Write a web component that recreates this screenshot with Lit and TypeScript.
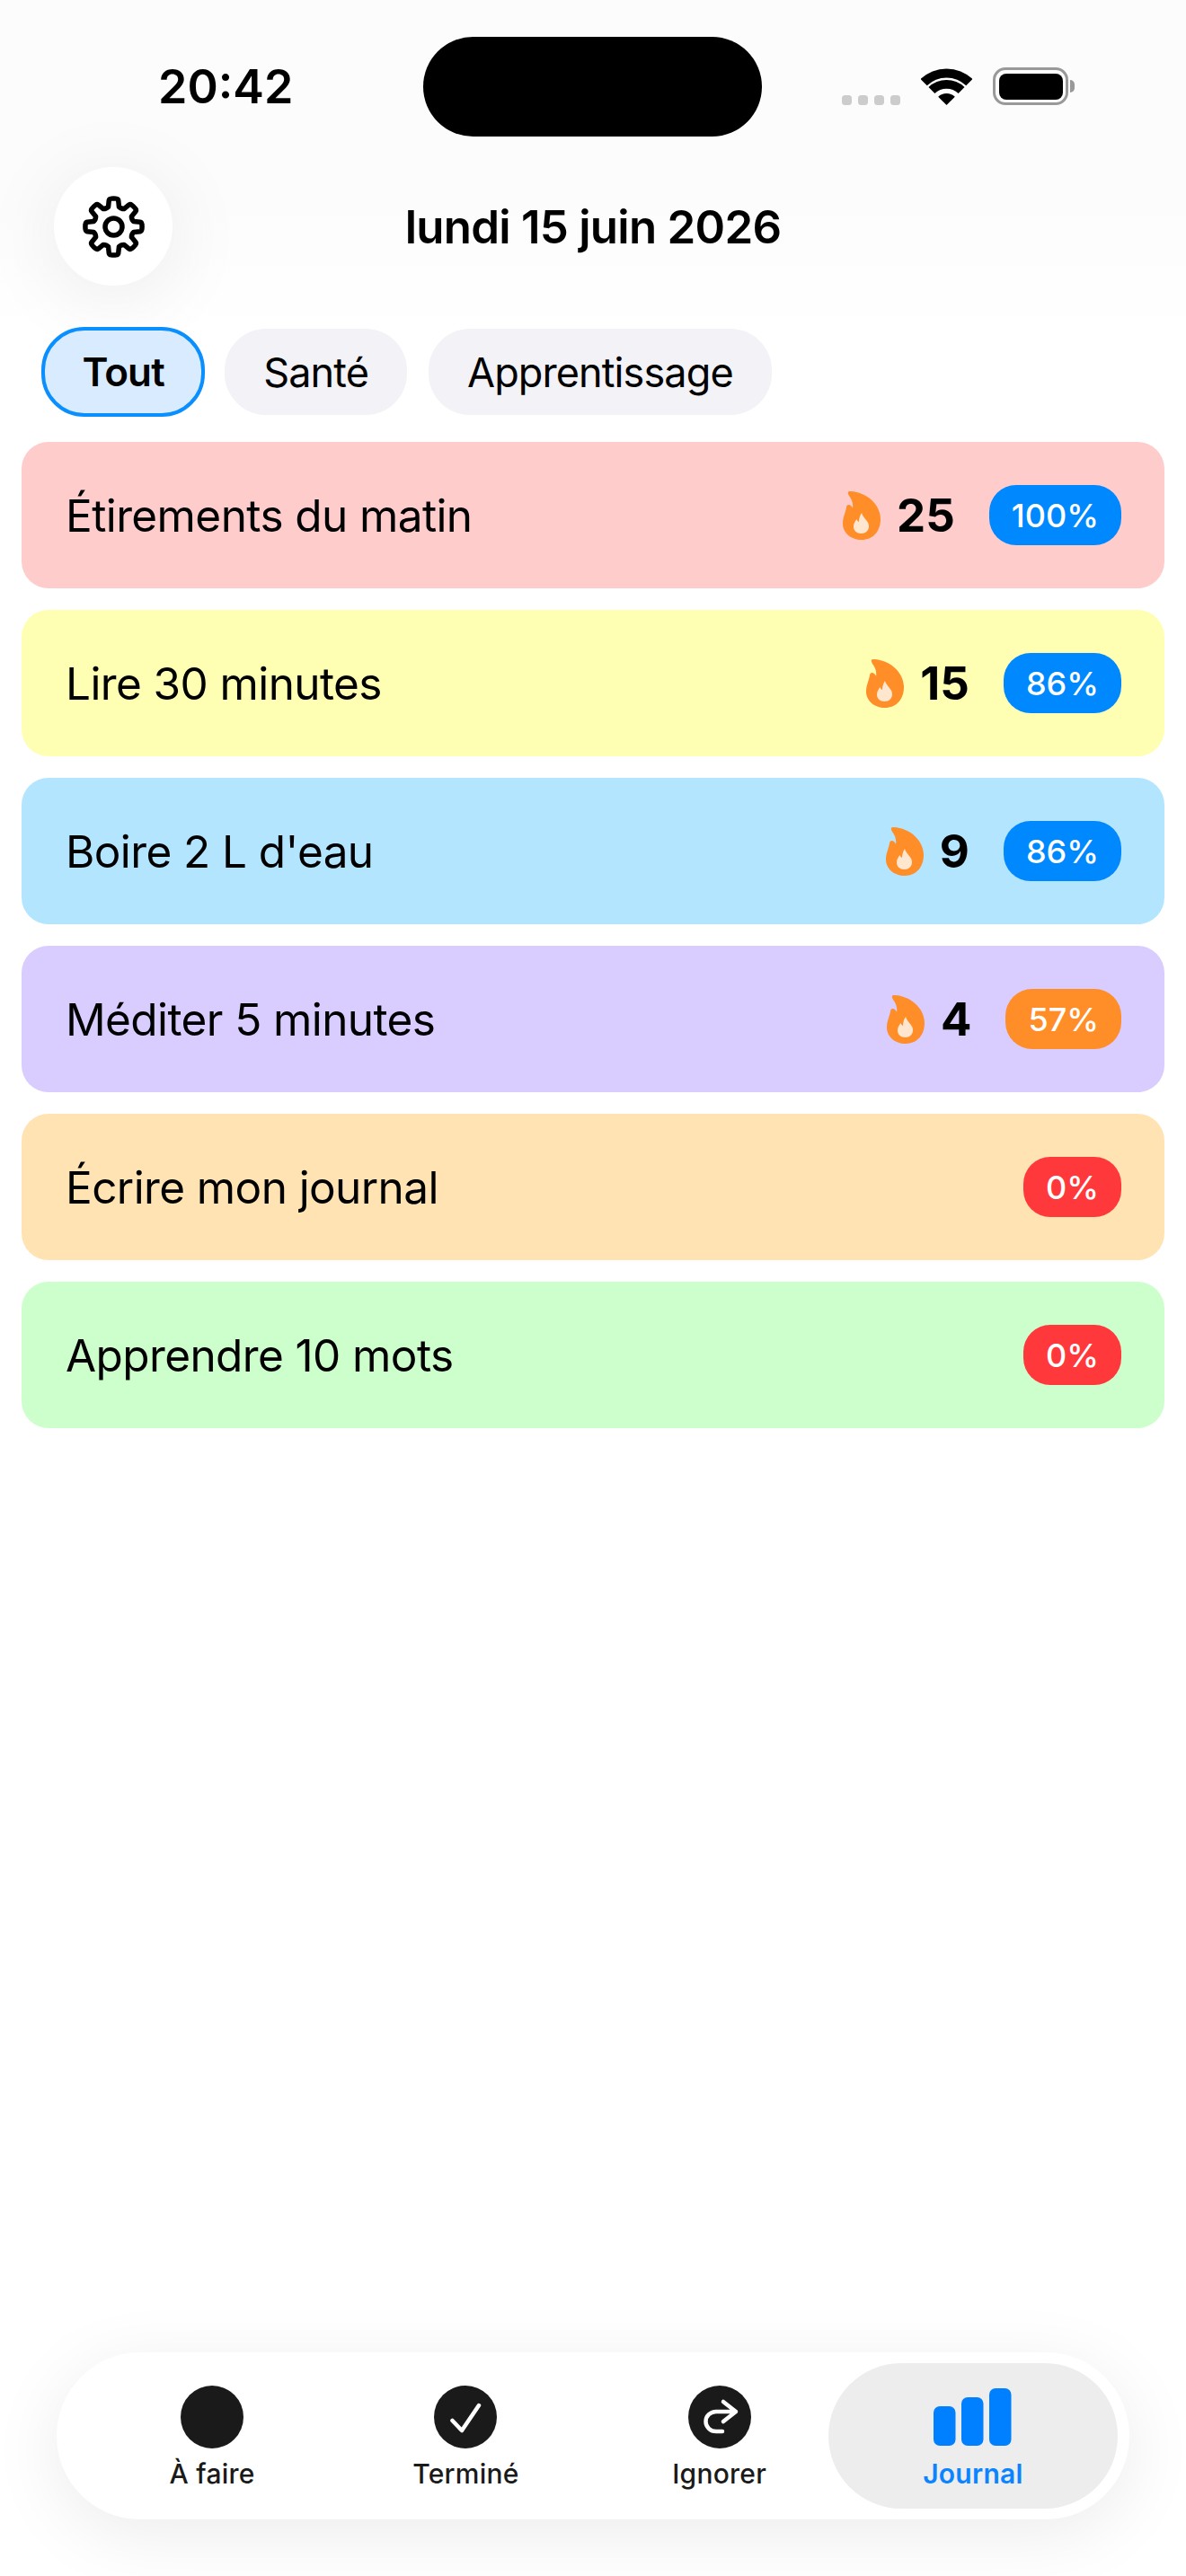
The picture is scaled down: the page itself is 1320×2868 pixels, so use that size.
import { LitElement, html, css } from "lit";
import { customElement } from "lit/decorators.js";

interface Habit { name: string; color: string; streak?: number; pct: number; level: string; }

const HABITS: Habit[] = [
  { name: "Étirements du matin", color: "#ffcccc", streak: 25, pct: 100, level: "high" },
  { name: "Lire 30 minutes", color: "#ffffb3", streak: 15, pct: 86, level: "high" },
  { name: "Boire 2 L d'eau", color: "#b3e5ff", streak: 9, pct: 86, level: "high" },
  { name: "Méditer 5 minutes", color: "#d9ccff", streak: 4, pct: 57, level: "mid" },
  { name: "Écrire mon journal", color: "#ffe3b3", pct: 0, level: "low" },
  { name: "Apprendre 10 mots", color: "#ccffcc", pct: 0, level: "low" },
];

function gearPath(cx: number, cy: number, R: number, r: number): string {
  const p = (rad: number, deg: number) => {
    const a = ((deg - 90) * Math.PI) / 180;
    return `${(cx + rad * Math.cos(a)).toFixed(2)} ${(cy + rad * Math.sin(a)).toFixed(2)}`;
  };
  let d = "";
  for (let i = 0; i < 8; i++) {
    const c = i * 45;
    d += i === 0 ? `M${p(r, c - 15)}` : ` Q${p(r - 1.5, c - 22.5)} ${p(r, c - 15)}`;
    d += ` L${p(R - 1, c - 10)} Q${p(R + 0.5, c - 9)} ${p(R + 0.5, c - 5)} Q${p(R + 0.8, c)} ${p(R + 0.5, c + 5)} Q${p(R + 0.5, c + 9)} ${p(R - 1, c + 10)} L${p(r, c + 15)}`;
  }
  d += ` Q${p(r - 1.5, -22.5)} ${p(r, -15)} Z`;
  return d;
}

function sector(cx: number, cy: number, r1: number, r2: number): string {
  const k = 0.69;
  const inner = r1 === 0
    ? `L${cx} ${cy}`
    : `L${cx + r1 * k} ${cy - r1 * k} A${r1} ${r1} 0 0 0 ${cx - r1 * k} ${cy - r1 * k}`;
  return `M${cx - r2 * k} ${cy - r2 * k} A${r2} ${r2} 0 0 1 ${cx + r2 * k} ${cy - r2 * k} ${inner} Z`;
}

const flame = html`<svg class="flame" viewBox="0 0 42 54" width="42" height="54">
  <path fill="#ff8d28" d="M6 1C6 0 7 0 9 0C26 1 42 14 42 31C42 45 33 54 21 54C9 54 0 46 0 36C0 29 3 24 4 18C4 15 7 14 9 16C10 17 11 18 11 19C12 14 10 9 7 5C6 3 5.5 2 6 1Z"/>
  <path fill="#fff" fill-opacity=".78" d="M21 24C21.5 27 24 29 26 32C28 34.5 29 36 29 39C29 43.5 25.5 47 20.5 47C15.5 47 12 43.5 12 39.5C12 36 13.5 33.5 15.5 31C16 32.5 17 33.5 18 34C18 30 19 27 21 24Z"/>
</svg>`;

@customElement("app-root")
export class AppRoot extends LitElement {
  static styles = css`
    :host {
      display: flex;
      flex-direction: column;
      width: 1320px;
      height: 2868px;
      overflow: hidden;
      background: #fff;
      font-family: Inter, "Liberation Sans", sans-serif;
      color: #000;
      position: relative;
    }
    .top {
      background: linear-gradient(#fcfcfc, #fcfcfc 60%, #fff);
      height: 373px;
      margin-bottom: -9px;
      flex: none;
    }
    .status {
      display: grid;
      grid-template-columns: 471px 377px 1fr;
      padding-top: 41px;
      height: 111px;
    }
    .time {
      font-size: 52px;
      font-weight: 600;
      line-height: 111px;
      padding-left: 176px;
    }
    .island { background: #000; border-radius: 56px; height: 111px; }
    .sys { display: flex; align-items: flex-start; padding: 34px 0 0 89px; }
    .dots { display: flex; gap: 7px; margin-top: 31px; }
    .dots i { display: block; width: 11px; height: 11px; border-radius: 3.5px; background: #ccc; }
    .wifi { margin-left: 23px; display: block; }
    .batt {
      margin-left: 23px;
      width: 84px;
      height: 42px;
      box-sizing: border-box;
      border: 3.5px solid #999;
      border-radius: 14px;
      padding: 3.5px;
      position: relative;
    }
    .batt b { display: block; height: 100%; background: #000; border-radius: 8px; }
    .batt::after {
      content: "";
      position: absolute;
      right: -10px;
      top: 10.5px;
      width: 5px;
      height: 14px;
      border-radius: 0 5px 5px 0;
      background: #999;
    }
    .head {
      display: grid;
      grid-template-columns: 1fr auto 1fr;
      align-items: center;
      padding: 34px 60px 0;
    }
    .gear {
      width: 132px;
      height: 132px;
      border-radius: 50%;
      background: #fff;
      box-shadow: 0 12px 90px rgba(0, 0, 0, 0.08);
      display: flex;
      align-items: center;
      justify-content: center;
    }
    .date { font-size: 51px; font-weight: 600; letter-spacing: -0.75px; }
    .chips {
      position: relative;
      background: linear-gradient(transparent 9px, #fff 9px);
      padding: 0 0 0 46px;
      display: flex;
      gap: 22px;
      align-items: center;
      height: 100px;
    }
    .chip {
      height: 96px;
      box-sizing: border-box;
      border-radius: 46px;
      background: #f2f2f7;
      display: flex;
      align-items: center;
      font-size: 45px;
      padding: 0 43px;
      letter-spacing: -0.9px;
    }
    .chip + .chip + .chip { margin-left: 2px; }
    .chip.on {
      height: 100px;
      background: #d9ebff;
      border: 4.5px solid #0a8fff;
      border-radius: 48px;
      font-size: 44px;
      font-weight: 600;
      padding: 0 41.5px;
    }
    .list { display: flex; flex-direction: column; gap: 24px; padding: 28px 24px 0; background: #fff; }
    .card {
      height: 163px;
      border-radius: 30px;
      display: flex;
      align-items: center;
      padding: 0 48px 0 49px;
    }
    .name { flex: 1; font-size: 49.5px; letter-spacing: -0.6px; }
    .streak { display: flex; align-items: center; gap: 18px; margin-right: 38px; font-size: 51px; font-weight: 700; }
    .flame { display: block; flex: none; }
    .badge {
      height: 67px;
      border-radius: 30px;
      padding: 0 25px;
      display: flex;
      align-items: center;
      color: #fff;
      font-size: 36px;
      font-weight: 500;
    }
    .high { background: #0088ff; }
    .mid { background: #ff8d28; }
    .low { background: #ff383c; }
    .spacer { flex: 1; }
    .bar {
      margin: 0 63px 63px;
      height: 186px;
      box-sizing: border-box;
      border-radius: 93px;
      background: #fff;
      box-shadow: 0 16px 80px rgba(0, 0, 0, 0.08);
      padding: 12px 33px 12px 32px;
      display: grid;
      grid-template-columns: repeat(4, 1fr);
    }
    .tab {
      position: relative;
      display: flex;
      flex-direction: column;
      align-items: center;
      padding-top: 25px;
      font-size: 30px;
      font-weight: 500;
      letter-spacing: 0.25px;
      color: #1a1a1a;
    }
    .tab svg { display: block; position: relative; }
    .tab span { position: relative; margin-top: 8px; line-height: 40px; }
    .tab.on { color: #0a84ff; font-weight: 600; }
    .tab.on::before {
      content: "";
      position: absolute;
      inset: 0 -20px;
      border-radius: 81px;
      background: #ededed;
    }
  `;

  render() {
    return html`
      <div class="top">
        <div class="status">
          <div class="time">20:42</div>
          <div class="island"></div>
          <div class="sys">
            <div class="dots"><i></i><i></i><i></i><i></i></div>
            <svg class="wifi" viewBox="0 0 57 42" width="57" height="42" fill="#000">
              <path d=${sector(28.5, 42, 31.5, 42)}/>
              <path d=${sector(28.5, 42, 19, 29)}/>
              <path d=${sector(28.5, 42, 0, 13.5)}/>
            </svg>
            <div class="batt"><b></b></div>
          </div>
        </div>
        <div class="head">
          <div class="gear">
            <svg viewBox="0 0 69 69" width="69" height="69" fill="none" stroke="#000" stroke-width="5.5" stroke-linejoin="round">
              <path d=${gearPath(34.5, 34.5, 31, 23)}/>
              <circle cx="34.5" cy="34.5" r="9.5"/>
            </svg>
          </div>
          <div class="date">lundi 15 juin 2026</div>
          <div></div>
        </div>
      </div>
      <div class="chips">
        <div class="chip on">Tout</div>
        <div class="chip">Santé</div>
        <div class="chip">Apprentissage</div>
      </div>
      <div class="list">
        ${HABITS.map(
          (h) => html`<div class="card" style="background:${h.color}">
            <div class="name">${h.name}</div>
            ${h.streak ? html`<div class="streak">${flame}<span>${h.streak}</span></div>` : ""}
            <div class="badge ${h.level}">${h.pct}%</div>
          </div>`
        )}
      </div>
      <div class="spacer"></div>
      <div class="bar">
        <div class="tab">
          <svg viewBox="0 0 70 70" width="70" height="70"><circle cx="35" cy="35" r="35" fill="#1a1a1a"/></svg>
          <span>À faire</span>
        </div>
        <div class="tab">
          <svg viewBox="0 0 70 70" width="70" height="70">
            <circle cx="35" cy="35" r="35" fill="#1a1a1a"/>
            <path d="M20.5 39L31 50L50 22" fill="none" stroke="#fff" stroke-width="4.5" stroke-linecap="round" stroke-linejoin="round"/>
          </svg>
          <span>Terminé</span>
        </div>
        <div class="tab">
          <svg viewBox="0 0 70 70" width="70" height="70">
            <circle cx="35" cy="35" r="35" fill="#1a1a1a"/>
            <path d="M39 18L53 29L39 40M53 29H31a11.5 11 0 0 0 0 22H38" fill="none" stroke="#fff" stroke-width="4.5" stroke-linecap="round" stroke-linejoin="round"/>
          </svg>
          <span>Ignorer</span>
        </div>
        <div class="tab on">
          <svg viewBox="0 0 87 70" width="87" height="70" fill="#0080ff">
            <rect x="0" y="23" width="24.5" height="44" rx="7"/>
            <rect x="31" y="13" width="24.5" height="54" rx="7"/>
            <rect x="62" y="3" width="24.5" height="64" rx="7"/>
          </svg>
          <span>Journal</span>
        </div>
      </div>
    `;
  }
}
